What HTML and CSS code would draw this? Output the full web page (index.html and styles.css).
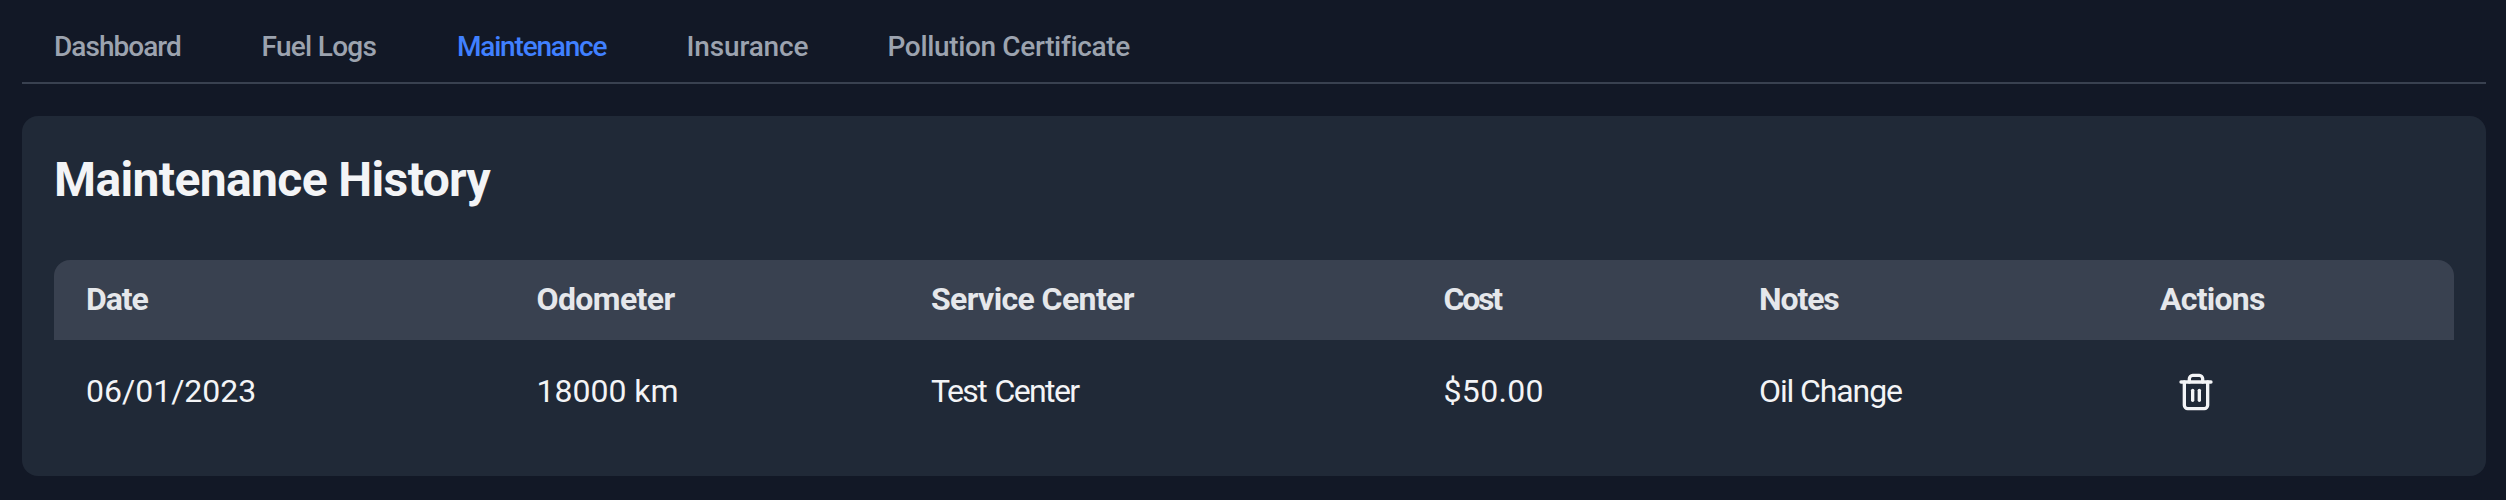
FILE: index.html
```html
<!DOCTYPE html>
<html lang="en">
<head>
<meta charset="utf-8">
<title>Maintenance History</title>
<link rel="stylesheet" href="styles.css">
</head>
<body>
<nav class="tabs">
  <a class="tab tab-dashboard">Dashboard</a>
  <a class="tab tab-fuel">Fuel Logs</a>
  <a class="tab tab-maintenance active">Maintenance</a>
  <a class="tab tab-insurance">Insurance</a>
  <a class="tab tab-pollution">Pollution Certificate</a>
</nav>
<main class="card">
  <h1 class="title">Maintenance History</h1>
  <div class="table">
    <div class="row head">
      <div class="cell"><span class="h-date">Date</span></div>
      <div class="cell"><span class="h-odometer">Odometer</span></div>
      <div class="cell"><span class="h-service">Service Center</span></div>
      <div class="cell"><span class="h-cost">Cost</span></div>
      <div class="cell"><span class="h-notes">Notes</span></div>
      <div class="cell"><span class="h-actions">Actions</span></div>
    </div>
    <div class="row body">
      <div class="cell"><span class="v-number">06/01/2023</span></div>
      <div class="cell"><span class="v-number">18000 km</span></div>
      <div class="cell"><span class="v-service">Test Center</span></div>
      <div class="cell"><span class="v-cost">$50.00</span></div>
      <div class="cell"><span class="v-notes">Oil Change</span></div>
      <div class="cell cell-action">
        <button class="delete" aria-label="Delete">
          <svg width="40" height="40" viewBox="0 0 24 24" fill="none" stroke="currentColor" stroke-width="2" stroke-linecap="round" stroke-linejoin="round"><path d="M3 6h18"/><path d="M19 6v14c0 1-1 2-2 2H7c-1 0-2-1-2-2V6"/><path d="M8 6V4c0-1 1-2 2-2h4c1 0 2 1 2 2v2"/><path d="M10 11v6"/><path d="M14 11v6"/></svg>
        </button>
      </div>
    </div>
  </div>
</main>
</body>
</html>
```
FILE: styles.css
```css
* { box-sizing: border-box; }
body {
  margin: 0;
  padding: 0 20px 0 22px;
  height: 500px;
  overflow: hidden;
  background: #121826;
  color: #f3f4f6;
  font-family: Roboto, "Noto Sans", sans-serif;
}
.tabs {
  display: flex;
  height: 84px;
  padding: 27px 0 0 32px;
  border-bottom: 2px solid #394150;
}
.tab {
  flex: none;
  font-size: 28px;
  line-height: 40px;
  font-weight: 500;
  color: #9ca3af;
  white-space: nowrap;
}
.tab.active { color: #4080ff; }
.tab-dashboard { width: 207.5px; letter-spacing: -0.96px; }
.tab-fuel { width: 195.5px; letter-spacing: -0.71px; }
.tab-maintenance { width: 229.5px; letter-spacing: -1.2px; }
.tab-insurance { width: 201px; letter-spacing: -0.15px; }
.tab-pollution { letter-spacing: -0.35px; }
.card {
  height: 360px;
  margin-top: 32px;
  padding: 32px;
  border-radius: 16px;
  background: #202937;
}
.title {
  margin: 0 0 48px;
  font-size: 48px;
  line-height: 64px;
  font-weight: 700;
  letter-spacing: -0.63px;
}
.table { border-radius: 16px; overflow: hidden; }
.row {
  display: grid;
  grid-template-columns: 450.5px 394.5px 512.5px 315.5px 401px 326px;
  align-items: center;
}
.cell { padding: 0 32px; font-size: 32px; line-height: 48px; white-space: nowrap; }
.head { height: 80px; padding-bottom: 2px; background: #394150; color: #e5e7eb; font-weight: 700; }
.body { height: 104px; }
.body .cell { padding-bottom: 2px; }
.body .cell-action { padding-bottom: 0; }
.h-date { letter-spacing: -1.1px; }
.h-odometer, .h-service { letter-spacing: -0.62px; }
.h-cost { letter-spacing: -2.2px; }
.h-notes { letter-spacing: -1.1px; }
.h-actions { letter-spacing: -0.75px; }
.v-number { letter-spacing: 0; }
.v-service { letter-spacing: -1.6px; word-spacing: 2px; }
.v-cost { letter-spacing: 0.33px; }
.v-notes { letter-spacing: -1.11px; }
.delete {
  display: flex;
  margin: 0;
  padding: 16px;
  border: 0;
  background: none;
  color: #f3f4f6;
}
```
